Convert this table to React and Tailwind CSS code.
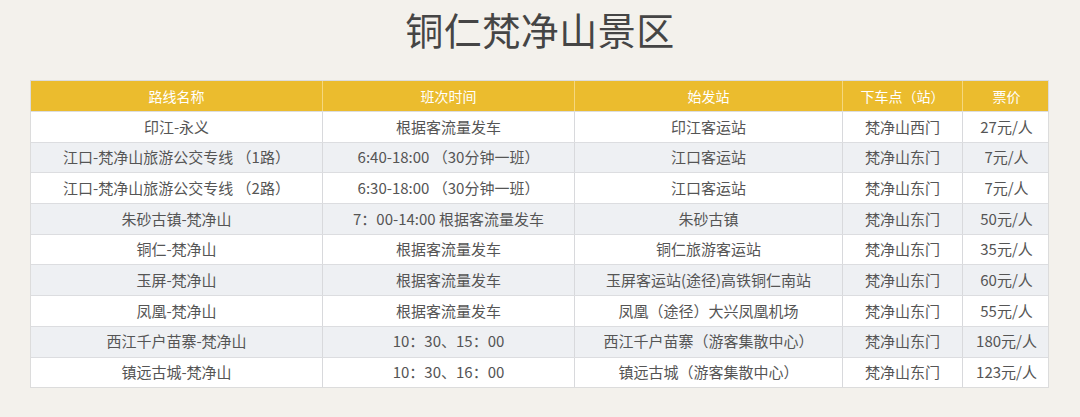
import React from "react";

const rows = [
  ["印江-永义", "根据客流量发车", "印江客运站", "梵净山西门", "27元/人"],
  ["江口-梵净山旅游公交专线 （1路）", "6:40-18:00 （30分钟一班）", "江口客运站", "梵净山东门", "7元/人"],
  ["江口-梵净山旅游公交专线 （2路）", "6:30-18:00 （30分钟一班）", "江口客运站", "梵净山东门", "7元/人"],
  ["朱砂古镇-梵净山", "7：00-14:00 根据客流量发车", "朱砂古镇", "梵净山东门", "50元/人"],
  ["铜仁-梵净山", "根据客流量发车", "铜仁旅游客运站", "梵净山东门", "35元/人"],
  ["玉屏-梵净山", "根据客流量发车", "玉屏客运站(途径)高铁铜仁南站", "梵净山东门", "60元/人"],
  ["凤凰-梵净山", "根据客流量发车", "凤凰（途径）大兴凤凰机场", "梵净山东门", "55元/人"],
  ["西江千户苗寨-梵净山", "10：30、15：00", "西江千户苗寨（游客集散中心）", "梵净山东门", "180元/人"],
  ["镇远古城-梵净山", "10：30、16：00", "镇远古城（游客集散中心）", "梵净山东门", "123元/人"],
];

const headers = ["路线名称", "班次时间", "始发站", "下车点（站）", "票价"];
const font = { fontFamily: '"Noto Sans CJK SC", "Noto Sans", sans-serif' };

export default function App() {
  return (
    <div className="w-[1080px] h-[417px] bg-[#f3f1ec] overflow-hidden" style={font}>
      <h1 className="h-[58px] pt-[3px] text-center text-[38px] leading-[52px] text-[#454545] font-normal tracking-[0.5px]">
        铜仁梵净山景区
      </h1>
      <div className="mt-[22px] ml-[30px] w-[1019px] border border-[#dcdcdc] bg-white">
        <div className="grid grid-cols-[292px_252px_268px_120px_87px] h-[30px] bg-[#ebbc2e] text-white text-[14px]">
          {headers.map((h, i) => (
            <div
              key={i}
              className={`flex items-center justify-center ${i < 4 ? "border-r border-[#f5d77e]" : ""}`}
            >
              {h}
            </div>
          ))}
        </div>
        {rows.map((r, ri) => (
          <div
            key={ri}
            className={`grid grid-cols-[292px_252px_268px_120px_87px] h-[30.7px] text-[15px] text-[#555555] border-t border-[#dcdde0] ${
              ri % 2 === 1 ? "bg-[#eef0f3]" : "bg-white"
            }`}
          >
            {r.map((c, ci) => (
              <div
                key={ci}
                className={`flex items-center justify-center whitespace-nowrap ${ci < 4 ? "border-r border-[#d8d9dc]" : ""}`}
              >
                {c}
              </div>
            ))}
          </div>
        ))}
      </div>
    </div>
  );
}
